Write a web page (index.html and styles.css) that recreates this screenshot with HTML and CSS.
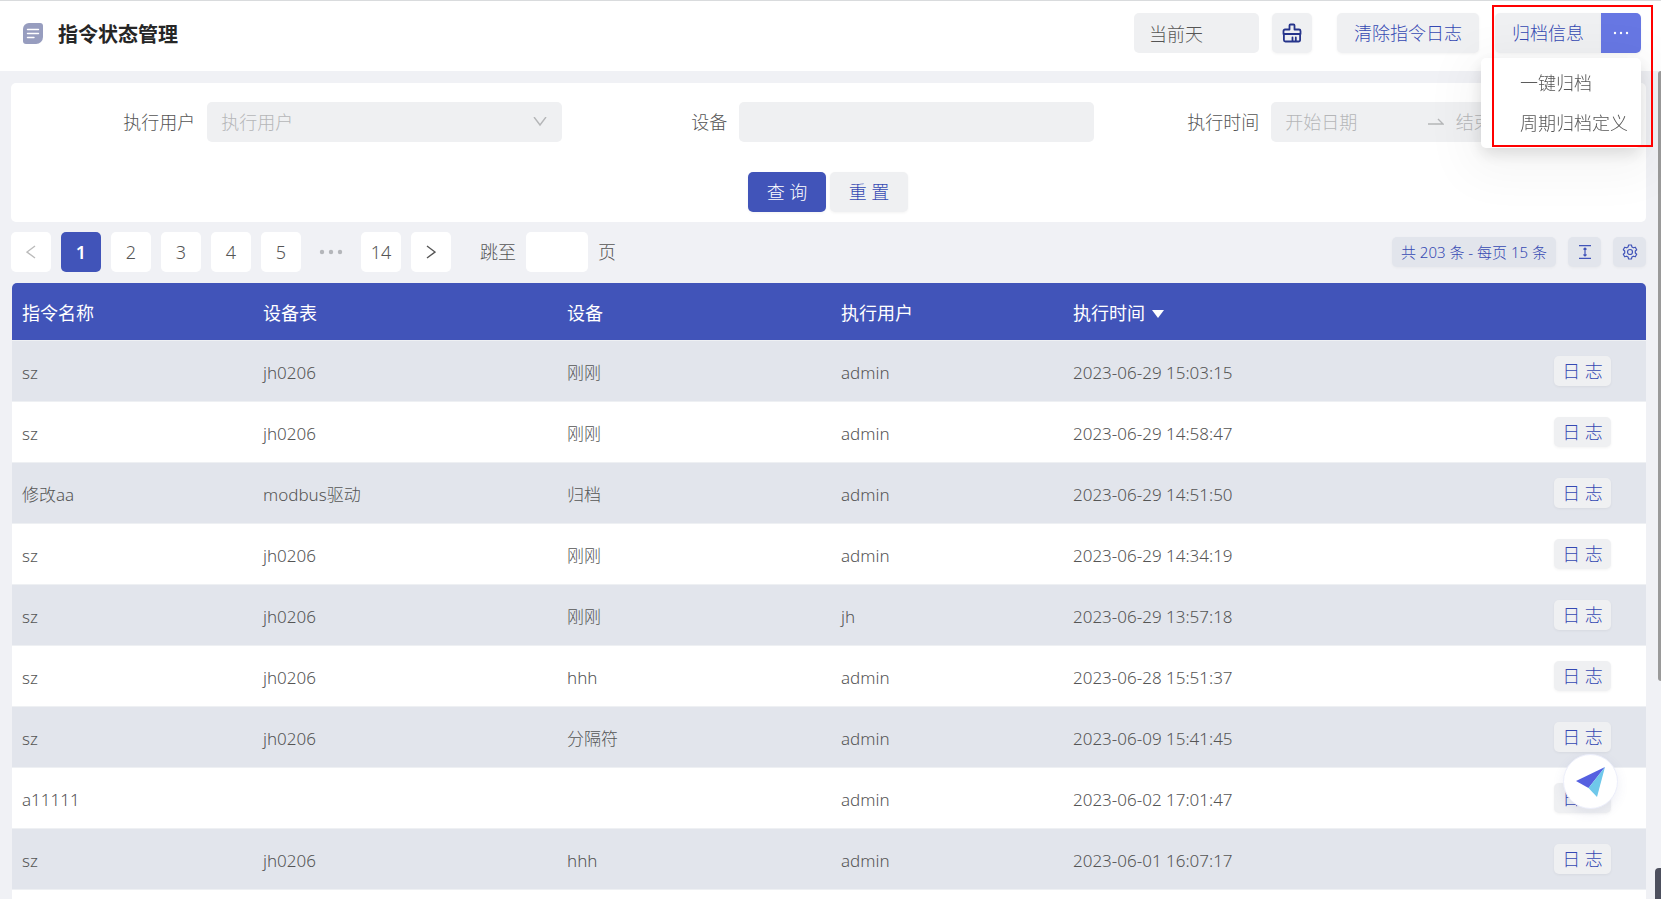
FILE: index.html
```html
<!DOCTYPE html>
<html lang="zh-CN">
<head>
<meta charset="utf-8">
<title>指令状态管理</title>
<link rel="stylesheet" href="styles.css">
</head>
<body>
<header class="topbar">
  <svg class="title-icon" viewBox="0 0 20 21" width="20" height="21"><path d="M6 0h11a3 3 0 0 1 3 3v11a7 7 0 0 1-7 7H3a3 3 0 0 1-3-3V6a6 6 0 0 1 6-6z" fill="#979dbf"/><path d="M4.500 6.500h11M4.500 10.500h11M4.500 14.500h6.500" stroke="#fff" stroke-width="1.400" stroke-linecap="round"/></svg>
  <h1 class="title">指令状态管理</h1>
  <div class="actions">
    <input class="day-field" type="text" value="当前天" aria-label="时间范围" readonly>
    <button class="btn square" aria-label="清理"><svg viewBox="0 0 20 20" width="20" height="20" fill="none" stroke="#26348b" stroke-width="1.800" stroke-linejoin="round" stroke-linecap="round"><path d="M7.500 6.500V2.500a1 1 0 0 1 1-1h3a1 1 0 0 1 1 1v4h4.500a1.500 1.500 0 0 1 1.500 1.500v3h-17V8a1.500 1.500 0 0 1 1.500-1.500zM1.900 11v6a1.500 1.500 0 0 0 1.500 1.500h13.200a1.500 1.500 0 0 0 1.500-1.500v-6M10.500 18v-3.500M13.800 18v-3.500"/></svg></button>
    <button class="btn clear">清除指令日志</button>
    <div class="split">
      <button class="btn archive">归档信息</button>
      <button class="btn more" aria-label="更多"><svg viewBox="0 0 18 4" width="18" height="4" fill="#fff"><circle cx="3" cy="2" r="1.200"/><circle cx="9" cy="2" r="1.200"/><circle cx="15" cy="2" r="1.200"/></svg></button>
      <ul class="menu">
        <li><button class="menu-item">一键归档</button></li>
        <li><button class="menu-item">周期归档定义</button></li>
      </ul>
      <div class="highlight"></div>
    </div>
  </div>
</header>

<main class="content">
  <form class="search">
    <div class="fields">
      <div class="field">
        <label for="user">执行用户</label>
        <div class="select-wrap">
          <select id="user" class="control placeholder"><option>执行用户</option></select>
          <svg class="chevron" viewBox="0 0 14 10" width="14" height="10" fill="none" stroke="#b5b6b8" stroke-width="1.400"><path d="M1 0l6 8 6-8"/></svg>
        </div>
      </div>
      <div class="field">
        <label for="device">设备</label>
        <input id="device" class="control" type="text">
      </div>
      <div class="field">
        <label for="start">执行时间</label>
        <div class="control range">
          <input id="start" type="text" placeholder="开始日期">
          <svg viewBox="0 0 16 8" width="16" height="8" fill="none" stroke="#b5b6b8" stroke-width="1.400"><path d="M0 6h15l-5-5"/></svg>
          <input type="text" placeholder="结束日期" aria-label="结束日期">
          <span class="range-end"></span>
        </div>
      </div>
    </div>
    <div class="buttons">
      <button type="button" class="btn primary">查 询</button>
      <button type="button" class="btn">重 置</button>
    </div>
  </form>

  <div class="toolbar">
    <nav class="pages" aria-label="分页">
      <button class="page" aria-label="上一页"><svg viewBox="0 0 10 16" width="10" height="16" fill="none" stroke="#bbb" stroke-width="1.400"><path d="M9 2L1 8l8 6"/></svg></button>
      <button class="page current">1</button>
      <button class="page">2</button>
      <button class="page">3</button>
      <button class="page">4</button>
      <button class="page">5</button>
      <span class="gap"><svg viewBox="0 0 24 6" width="24" height="6" fill="#b4b6ba"><circle cx="3" cy="3" r="2.200"/><circle cx="12" cy="3" r="2.200"/><circle cx="21" cy="3" r="2.200"/></svg></span>
      <button class="page">14</button>
      <button class="page" aria-label="下一页"><svg viewBox="0 0 10 16" width="10" height="16" fill="none" stroke="#555" stroke-width="1.400"><path d="M1 2l8 6-8 6"/></svg></button>
      <label class="jump" for="jump">跳至</label>
      <input id="jump" class="jump-input" type="text">
      <span>页</span>
    </nav>
    <div class="tools">
      <button class="tool total">共 203 条 - 每页 15 条</button>
      <button class="tool" aria-label="密度"><svg viewBox="0 0 12 14" width="12" height="14" fill="none" stroke="#4154b9" stroke-width="1.200"><path d="M0 .7h12M0 13.300h12M6 3v8M4.500 4.500L6 3l1.500 1.500M4.500 9.500L6 11l1.500-1.500"/></svg></button>
      <button class="tool" aria-label="设置"><svg viewBox="0 0 16 16" width="16" height="16" fill="none" stroke="#4154b9" stroke-width="1.200" stroke-linejoin="round"><circle cx="8" cy="8" r="2.500"/><path d="M6.600 1h2.800l.5 1.900 1.500.9 1.900-.6 1.400 2.500L13.300 7v2l1.400 1.300-1.400 2.500-1.900-.6-1.500.9-.5 1.900H6.600l-.5-1.900-1.500-.9-1.900.6-1.400-2.500L2.700 9V7L1.300 5.700l1.400-2.500 1.900.6 1.500-.9z"/></svg></button>
    </div>
  </div>

  <div class="grid-wrap">
  <table class="grid">
    <colgroup><col class="c1"><col class="c2"><col class="c3"><col class="c4"><col class="c5"><col class="c6"></colgroup>
    <thead><tr><th>指令名称</th><th>设备表</th><th>设备</th><th>执行用户</th><th>执行时间<svg class="sort" viewBox="0 0 12 8" width="12" height="8"><path d="M0 0h12L6 8z" fill="#fff"/></svg></th><th></th></tr></thead>
    <tbody>
      <tr><td>sz</td><td>jh0206</td><td>刚刚</td><td>admin</td><td>2023-06-29 15:03:15</td><td><button class="log">日 志</button></td></tr>
      <tr><td>sz</td><td>jh0206</td><td>刚刚</td><td>admin</td><td>2023-06-29 14:58:47</td><td><button class="log">日 志</button></td></tr>
      <tr><td>修改aa</td><td>modbus驱动</td><td>归档</td><td>admin</td><td>2023-06-29 14:51:50</td><td><button class="log">日 志</button></td></tr>
      <tr><td>sz</td><td>jh0206</td><td>刚刚</td><td>admin</td><td>2023-06-29 14:34:19</td><td><button class="log">日 志</button></td></tr>
      <tr><td>sz</td><td>jh0206</td><td>刚刚</td><td>jh</td><td>2023-06-29 13:57:18</td><td><button class="log">日 志</button></td></tr>
      <tr><td>sz</td><td>jh0206</td><td>hhh</td><td>admin</td><td>2023-06-28 15:51:37</td><td><button class="log">日 志</button></td></tr>
      <tr><td>sz</td><td>jh0206</td><td>分隔符</td><td>admin</td><td>2023-06-09 15:41:45</td><td><button class="log">日 志</button></td></tr>
      <tr><td>a11111</td><td></td><td></td><td>admin</td><td>2023-06-02 17:01:47</td><td><button class="log">日 志</button></td></tr>
      <tr><td>sz</td><td>jh0206</td><td>hhh</td><td>admin</td><td>2023-06-01 16:07:17</td><td><button class="log">日 志</button></td></tr>
      <tr><td></td><td></td><td></td><td></td><td></td><td></td></tr>
    </tbody>
  </table>
  </div>
</main>

<button class="float" aria-label="发送"><svg viewBox="0 0 30 30" width="30" height="30"><path d="M0 14L29 0 12.500 21z" fill="#5560e0"/><path d="M29 0L12.500 21 21 30z" fill="#6fc8ea"/></svg></button>
<div class="scrollbar"></div>
<div class="corner"></div>
</body>
</html>
```
FILE: styles.css
```css
* { box-sizing: border-box; }
body {
  margin: 0;
  height: 100vh;
  overflow: hidden;
  background: #f0f1f5;
  color: #555;
  font: 18px/24px "Noto Sans", "Noto Sans CJK SC", sans-serif;
  font-weight: 300;
}
button, input, select { font: inherit; color: inherit; border: 0; margin: 0; }
button { padding: 0; cursor: pointer; }
.topbar {
  display: flex;
  align-items: center;
  height: 71px;
  padding: 0 20px 6px 23px;
  background: #fff;
  border-top: 1px solid #d9dbdd;
}
.title-icon { margin-right: 15px; }
.title { margin: 0; padding-top: 4px; font-size: 20px; line-height: 28px; font-weight: 700; color: #262626; }
.actions { display: flex; align-items: center; margin-left: auto; }
.day-field { width: 125px; height: 40px; padding: 0 15px; border-radius: 5px; background: #eff0f2; }
.btn {
  height: 40px;
  border-radius: 5px;
  background: #eff0f2;
  color: #3549b3;
  box-shadow: 0 1px 3px rgba(0, 0, 0, .05);
}
.square { display: grid; place-items: center; width: 40px; margin: 0 25px 0 13px; }
.clear { width: 142px; margin-right: 16px; }
.split { position: relative; display: flex; }
.archive { width: 106px; border-radius: 5px 0 0 5px; }
.more { display: grid; place-items: center; width: 40px; border-radius: 0 5px 5px 0; background: #6777e3; }
.menu {
  position: absolute;
  z-index: 2;
  top: 45px;
  right: 0;
  width: 160px;
  margin: 0;
  padding: 5px 0;
  list-style: none;
  background: #fff;
  border-radius: 5px;
  box-shadow: 0 6px 16px rgba(0, 0, 0, .12), 0 12px 48px 16px rgba(0, 0, 0, .04);
}
.menu-item { width: 100%; height: 40px; padding-left: 39px; background: none; text-align: left; white-space: nowrap; }
.highlight { position: absolute; z-index: 3; top: -8px; right: -12px; width: 161px; height: 142px; border: 2px solid #f00; pointer-events: none; }

.content { padding: 12px 15px 0 11px; }
.search { padding: 19px 20px 10px 19px; background: #fff; border-radius: 5px; }
.fields { display: grid; grid-template-columns: repeat(3, minmax(0, 1fr)); }
.field { display: grid; grid-template-columns: minmax(0, 1fr) minmax(0, 2fr); align-items: center; }
.field label { padding-right: 12px; text-align: right; }
.control { width: 100%; height: 40px; padding: 0 14px; border-radius: 5px; background: #eff0f2; }
.select-wrap { position: relative; }
.select-wrap select { display: block; appearance: none; }
.placeholder { color: #b5b6b8; }
::placeholder { color: #b5b6b8; opacity: 1; }
.chevron { position: absolute; right: 15px; top: 15px; pointer-events: none; }
.range { display: flex; align-items: center; gap: 12px; }
.range input { flex: 1; min-width: 0; padding: 0; background: none; }
.range-end { width: 14px; }
.buttons { display: flex; justify-content: center; gap: 4px; margin-top: 30px; }
.buttons .btn { width: 78px; }
.buttons .primary { background: #4154b9; color: #fff; }

.toolbar { display: flex; align-items: center; justify-content: space-between; margin: 10px 0 11px; }
.pages { display: flex; align-items: center; gap: 10px; }
.page, .gap { display: grid; place-items: center; width: 40px; height: 40px; }
.page { border-radius: 5px; background: #fff; }
.current { background: #4154b9; color: #fff; font-weight: 600; }
.jump { margin-left: 19px; }
.jump-input { width: 62px; height: 40px; border-radius: 5px; background: #fff; }
.tools { display: flex; gap: 12px; }
.tool {
  display: grid;
  place-items: center;
  width: 33px;
  height: 30px;
  border-radius: 5px;
  background: #e2e5ec;
  color: #3549b3;
  font-size: 15px;
  box-shadow: 0 1px 3px rgba(0, 0, 0, .04);
}
.total { width: auto; padding: 0 9px; }

.grid-wrap { padding-left: 1px; }
.grid { width: 100%; table-layout: fixed; border-spacing: 0; border-radius: 5px 5px 0 0; overflow: hidden; }
.c1 { width: 241px; }
.c2 { width: 304px; }
.c3 { width: 274px; }
.c4 { width: 232px; }
.c6 { width: 126px; }
.grid th { height: 58px; padding: 2px 10px 0; background: #4154b9; color: #fff; font-weight: 400; text-align: left; border-bottom: 1px solid #eef0f3; }
.grid td { height: 61px; padding: 4px 10px 0; background: #fff; font-size: 17px; border-bottom: 1px solid #eef0f3; }
.grid tr:nth-child(odd) td { background: #e2e5ec; }
.grid th { background: #4154b9; }
.grid td:last-child { padding: 0 35px 0 0; text-align: right; }
.sort { margin-left: 7px; vertical-align: 2px; }
.log { width: 57px; height: 30px; border-radius: 5px; background: #eff0f2; color: #3549b3; font-size: 18px; box-shadow: 0 1px 3px rgba(0, 0, 0, .05); }

.float {
  position: fixed;
  right: 43px;
  bottom: 90px;
  display: grid;
  place-items: center;
  width: 55px;
  height: 55px;
  border: 1px solid #eceefa;
  border-radius: 50%;
  background: #fff;
  box-shadow: 0 4px 12px rgba(80, 90, 160, .1);
}
.scrollbar { position: fixed; top: 71px; right: 0; width: 3px; height: 610px; border-radius: 3px 0 0 3px; background: #9a9a9a; }
.corner { position: fixed; right: 0; bottom: 0; width: 6px; height: 31px; border-radius: 4px 0 0 0; background: #4d505e; }
```
